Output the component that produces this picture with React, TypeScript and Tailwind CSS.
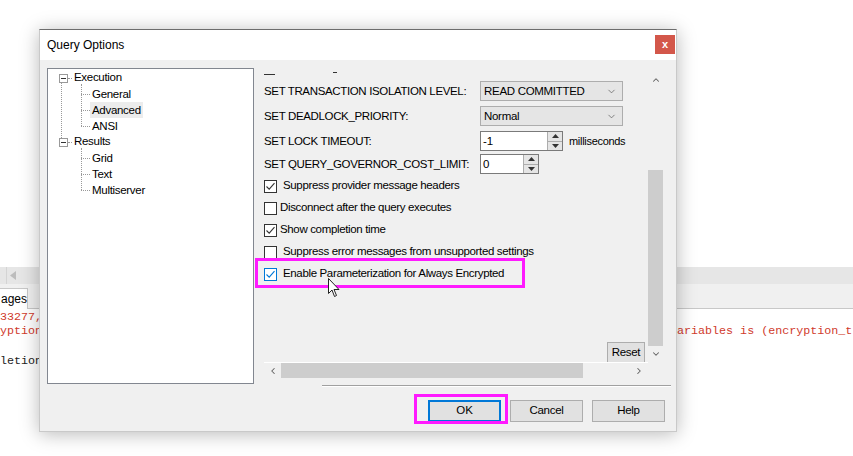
import { ChevronDown, ChevronUp, ChevronLeft, ChevronRight } from 'lucide-react';

const UI = { fontFamily: '"Liberation Sans", Arial, sans-serif' };
const MONO = { fontFamily: '"Liberation Mono", "Courier New", monospace' };

function Check({ checked, hot }: { checked: boolean; hot?: boolean }) {
  return (
    <div
      className={`w-[13px] h-[13px] shrink-0 bg-white border flex items-center justify-center ${
        hot ? 'border-[#0078d7]' : 'border-[#333]'
      }`}
    >
      {checked && (
        <svg width="11" height="11" viewBox="0 0 11 11">
          <path d="M1.5 5.5 L4.2 8.2 L9.5 2.2" fill="none" stroke={hot ? '#0078d7' : '#333'} strokeWidth="1.1" />
        </svg>
      )}
    </div>
  );
}

function Combo({ value }: { value: string }) {
  return (
    <div className="w-[143px] h-[20px] bg-[#e5e5e5] border border-[#adadad] flex items-center justify-between pl-[3px] pr-[5px] pt-px">
      <span className="text-[11.5px] tracking-[-0.3px] text-black">{value}</span>
      <ChevronDown className="w-[11px] h-[11px] text-[#555]" strokeWidth={1.5} />
    </div>
  );
}

function Spin({ value, width }: { value: string; width: string }) {
  return (
    <div className={`${width} h-[20px] bg-white border border-[#7a7a7a] flex`}>
      <span className="flex-1 text-[11.5px] pl-[2px] leading-[18px]">{value}</span>
      <div className="w-[15px] flex flex-col border-l border-[#adadad]">
        <div className="flex-1 bg-[#e5e5e5] border-b border-[#adadad] flex items-center justify-center">
          <svg width="7" height="4" viewBox="0 0 7 4"><path d="M0 4 L3.5 0 L7 4Z" fill="#333" /></svg>
        </div>
        <div className="flex-1 bg-[#e5e5e5] flex items-center justify-center">
          <svg width="7" height="4" viewBox="0 0 7 4"><path d="M0 0 L3.5 4 L7 0Z" fill="#333" /></svg>
        </div>
      </div>
    </div>
  );
}

function Expander() {
  return (
    <div className="w-[9px] h-[9px] border border-[#999] bg-white flex items-center justify-center shrink-0">
      <div className="w-[5px] h-px bg-[#333]" />
    </div>
  );
}

function TreeChild({ label, selected }: { label: string; selected?: boolean }) {
  return (
    <div className="h-[16px] flex items-center">
      <div className="w-[9px] h-px border-t border-dotted border-[#999] ml-[33px]" />
      <span className={`text-[11.5px] tracking-[-0.3px] px-[2px] leading-[16px] ${selected ? 'bg-[#ececec]' : ''}`}>{label}</span>
    </div>
  );
}

function OptionRow({ checked, hot, label, gap }: { checked: boolean; hot?: boolean; label: string; gap: string }) {
  return (
    <div className={`h-[22px] flex items-center ${gap}`}>
      <Check checked={checked} hot={hot} />
      <span className="text-[11.5px] tracking-[-0.35px] text-black whitespace-nowrap">{label}</span>
    </div>
  );
}

const LABEL = 'text-[11.5px] tracking-[-0.35px] h-[20px] leading-[20px] whitespace-nowrap';

export default function App() {
  return (
    <div className="relative w-[853px] h-[456px] bg-white overflow-hidden" style={UI}>
      {/* background editor */}
      <div className="flex flex-col">
        <div className="h-[267px]" />
        <div className="h-[17px] bg-[#e6e6e6] flex items-center">
          <div className="w-[7px] h-full border-r border-[#d4d4d4]" />
          <svg width="6" height="9" viewBox="0 0 6 9" className="ml-[3px]"><path d="M6 0 L0 4.5 L6 9Z" fill="#bcbcbc" /></svg>
        </div>
        <div className="h-[25px] bg-[#f0f0f0] border-b border-[#c8c8c8] flex items-end">
          <div className="h-[21px] w-[28px] bg-white border-r border-t border-[#c8c8c8] -mb-px text-[12px] leading-[20px] pl-[1px]">ages</div>
        </div>
        <div className="text-[11.7px] leading-[14px] whitespace-pre pt-px" style={MONO}>
          <div className="text-[#d03a2c]">33277,</div>
          <div className="flex text-[#d03a2c]">
            <span className="w-[677px] shrink-0">yption</span>
            <span className="shrink-0">ariables is (encryption_t</span>
          </div>
          <div className="h-[16px]" />
          <div className="text-[#222]">letion</div>
        </div>
      </div>

      {/* dialog window */}
      <div className="absolute left-[39px] top-[29px] w-[638px] h-[403px] flex flex-col border-t border-[#6d6d6d] border-x border-b border-x-[#c9c9c9] border-b-[#c9c9c9] shadow-[0_2px_18px_rgba(0,0,0,0.28)]">
        <div className="h-[30px] bg-white flex items-center justify-between pl-[7px]">
          <span className="text-[12px] text-black">Query Options</span>
          <div className="w-[20px] h-[19px] bg-[#d3574a] flex items-center justify-center text-white text-[11px] font-bold mr-px -mt-[2px]">x</div>
        </div>
        <div className="flex-1 bg-[#f0f0f0] flex flex-col pt-[8px] pl-[7px]">
          <div className="flex h-[316px]">
            {/* tree */}
            <div className="w-[207px] h-[316px] bg-white border border-[#828790] pt-px relative">
              <div className="absolute left-[13px] top-[14px] h-[55px] border-l border-dotted border-[#999]" />
              <div className="absolute left-[33px] top-[15px] h-[42px] border-l border-dotted border-[#999]" />
              <div className="absolute left-[33px] top-[79px] h-[42px] border-l border-dotted border-[#999]" />
              <div className="h-[16px] flex items-center pl-[11px]">
                <Expander />
                <div className="w-[4px] border-t border-dotted border-[#999] mr-px" />
                <span className="text-[11.5px] tracking-[-0.3px] px-px">Execution</span>
              </div>
              <TreeChild label="General" />
              <TreeChild label="Advanced" selected />
              <TreeChild label="ANSI" />
              <div className="h-[16px] flex items-center pl-[11px]">
                <Expander />
                <div className="w-[4px] border-t border-dotted border-[#999] mr-px" />
                <span className="text-[11.5px] tracking-[-0.3px] px-px">Results</span>
              </div>
              <TreeChild label="Grid" />
              <TreeChild label="Text" />
              <TreeChild label="Multiserver" />
            </div>

            {/* options panel */}
            <div className="ml-[3px] w-[407px] h-[310px] flex flex-col">
              <div className="flex h-[294px]">
                <div className="flex-1 overflow-hidden pl-[7px] relative">
                  <div className="h-[13px] relative">
                    <div className="absolute left-0 top-[6px] w-[11px] h-px bg-[#333]" />
                    <div className="absolute left-[69px] top-[4px] w-[4px] h-px bg-[#333]" />
                  </div>
                  <div className="grid grid-cols-[216px_auto] items-center">
                    <span className={LABEL}>SET TRANSACTION ISOLATION LEVEL:</span>
                    <Combo value="READ COMMITTED" />
                    <span className={`${LABEL} mt-[5px]`}>SET DEADLOCK_PRIORITY:</span>
                    <div className="mt-[5px]"><Combo value="Normal" /></div>
                    <span className={`${LABEL} mt-[5px]`}>SET LOCK TIMEOUT:</span>
                    <div className="mt-[5px] flex items-center gap-[6px]">
                      <Spin value="-1" width="w-[83px]" />
                      <span className="text-[11px] tracking-[-0.3px]">milliseconds</span>
                    </div>
                    <span className={`${LABEL} mt-[3px]`}>SET QUERY_GOVERNOR_COST_LIMIT:</span>
                    <div className="mt-[3px]"><Spin value="0" width="w-[59px]" /></div>
                  </div>
                  <div className="pt-px">
                    <OptionRow checked label="Suppress provider message headers" gap="gap-[6px]" />
                    <OptionRow checked={false} label="Disconnect after the query executes" gap="gap-[3px]" />
                    <OptionRow checked label="Show completion time" gap="gap-[3px]" />
                    <OptionRow checked={false} label="Suppress error messages from unsupported settings" gap="gap-[6px]" />
                    <OptionRow checked hot label="Enable Parameterization for Always Encrypted" gap="gap-[6px]" />
                  </div>
                  <div className="absolute right-[2px] bottom-[-1px] w-[38px] h-[21px] bg-[#e1e1e1] border border-[#adadad] text-[11.5px] tracking-[-0.3px] flex items-center justify-center">
                    Reset
                  </div>
                </div>
                {/* vertical scrollbar */}
                <div className="w-[17px] bg-[#f0f0f0] flex flex-col">
                  <div className="h-[17px] flex items-center justify-center mt-[3px]">
                    <ChevronUp className="w-[10px] h-[10px] text-[#606060]" strokeWidth={2.5} />
                  </div>
                  <div className="h-[82px]" />
                  <div className="flex-1 bg-[#cdcdcd] mx-px" />
                  <div className="h-[16px] flex items-center justify-center">
                    <ChevronDown className="w-[10px] h-[10px] text-[#606060]" strokeWidth={2.5} />
                  </div>
                </div>
              </div>
              {/* horizontal scrollbar */}
              <div className="h-[16px] ml-[7px] w-[384px] bg-[#f0f0f0] border-t border-white flex items-center">
                <div className="w-[17px] flex items-center justify-center">
                  <ChevronLeft className="w-[10px] h-[10px] text-[#606060]" strokeWidth={2.5} />
                </div>
                <div className="w-[302px] h-[15px] bg-[#cdcdcd]" />
                <div className="flex-1 flex items-center justify-end pr-[4px]">
                  <ChevronRight className="w-[10px] h-[10px] text-[#606060]" strokeWidth={2.5} />
                </div>
              </div>
            </div>
          </div>

          <div className="ml-[275px] w-[349px] mt-px h-[2px] border-t border-[#a0a0a0] border-b border-b-white" />

          <div className="mt-[13px] flex justify-end gap-[9px] pr-[11px]">
            <div className="w-[73px] h-[22px] bg-[#e1e1e1] border-2 border-[#0078d7] text-[11.5px] flex items-center justify-center">OK</div>
            <div className="w-[73px] h-[22px] bg-[#e1e1e1] border border-[#adadad] text-[11.5px] tracking-[-0.3px] flex items-center justify-center">Cancel</div>
            <div className="w-[73px] h-[22px] bg-[#e1e1e1] border border-[#adadad] text-[11.5px] tracking-[-0.3px] flex items-center justify-center">Help</div>
          </div>
        </div>
      </div>

      {/* annotation highlights */}
      <div className="absolute left-[255px] top-[258px] w-[270px] h-[30px] border-[3px] border-[#ff1aff]" />
      <div className="absolute left-[414px] top-[394px] w-[94px] h-[30px] border-[3px] border-[#ff1aff]" />

      {/* mouse cursor */}
      <svg className="absolute left-[328px] top-[278px]" width="13" height="20" viewBox="0 0 13 20">
        <path d="M0.5 0.5 L0.5 15.5 L4 12 L6.5 18.5 L8.5 17.5 L6 11.5 L11 11.5 Z" fill="white" stroke="#222" strokeWidth="1" />
      </svg>
    </div>
  );
}
